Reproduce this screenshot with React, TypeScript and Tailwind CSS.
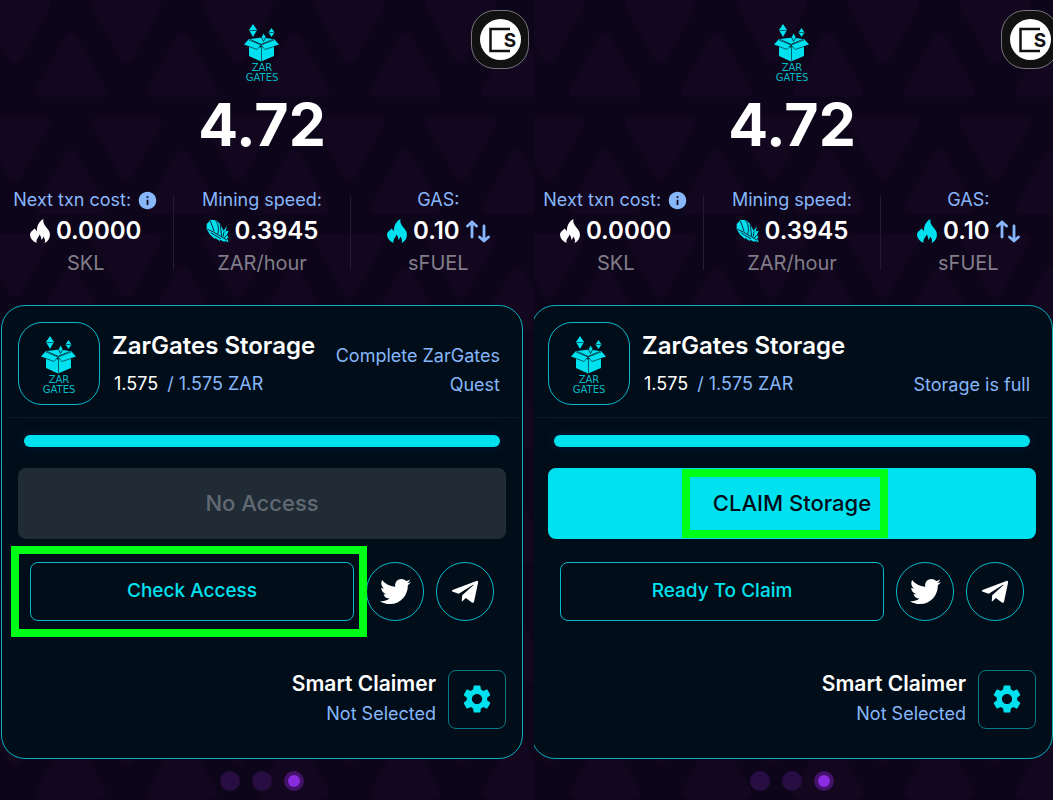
import { useId, type ReactNode } from "react";
import { FaTelegramPlane, FaTwitter } from "react-icons/fa";
import { MdInfo, MdSettings } from "react-icons/md";

function TriangleBackground() {
    const id = useId()

    return (
        <svg className="absolute inset-0 h-full w-full" aria-hidden="true">
            <defs>
                <pattern id={id} x="15" y="0" width="111.5" height="117" patternUnits="userSpaceOnUse">
                    <g fill="#12071e" stroke="#12071e" strokeWidth="12" strokeLinejoin="round">
                        <path d="M-29 5H29L0 57Z" />
                        <path d="M82.500 5H140.500L111.500 57Z" />
                        <path d="M27 91H85L56 39Z" />
                    </g>
                </pattern>
            </defs>
            <rect width="100%" height="100%" fill={`url(#${id})`} />
        </svg>
    )
}

function ZarGatesLogo() {
    return (
        <svg width="60" height="60" viewBox="0 0 60 60" aria-label="Zar Gates">
            <g fill="#00e1ef">
                <path d="M21 2L25 8L21 15L17 8Z" />
                <path d="M39.500 6L42.500 10.500L39.500 15L36.500 10.500Z" />
                <path d="M17 22L29 25.500L42 22V34L29 39.500L17 34Z" />
                <path d="M17 17L29 23L25 27L12 22.500Z" />
                <path d="M42 17L29 23L33 27L47 22.500Z" />
                <path d="M18 17L30 15.500L41 17L29 22Z" />
                <path d="M31.500 11L34 15L31.500 19.500L29.500 15Z" stroke="#020d19" strokeWidth="0.700" />
            </g>
            <path
                d="M17.500 8.500H24.500M37 10.500H42M29.500 23V40M17 18L29 23L42 18M17 24.500L25 27.500L29 23L33 27.500L42 24.500"
                fill="none"
                stroke="#02505c"
                strokeWidth="0.900"
            />
            <g fill="#08b9c7" fontFamily="DejaVu Sans" fontSize="10" textAnchor="middle">
                <text x="30" y="49">ZAR</text>
                <text x="30" y="59">GATES</text>
            </g>
        </svg>
    )
}

function FlameIcon({ className }: { className: string }) {
    return (
        <svg width="20" height="24" viewBox="0 0 58 70" className={className} aria-hidden="true">
            <path
                fill="currentColor"
                d="M39 0C37 12 43 18 49 26C55 33 58 38 58 46C58 57 52 66 42 70C46 63 43 57 38 51C38 56 36 59 33 61C33 54 31 49 27 45C27 53 16 58 19 70C8 65 0 56 0 46C0 38 8 34 13 28C16 30 18 33 18 36C21 33 20 28 21 23C23 13 31 4 39 0Z"
            />
        </svg>
    )
}

function MeteorIcon() {
    return (
        <svg width="23" height="24" viewBox="0 0 68 70" aria-hidden="true">
            <path fill="#00e1ef" d="M2 14L14 2L30 3L42 14L52 34L62 20L58 36L67 34L62 46L67 56L62 56L67 68L54 64L56 68L40 60L42 66L26 54L28 60L12 46L2 30Z" />
            <path
                fill="none"
                stroke="#0d051a"
                strokeWidth="2.500"
                d="M4 30L22 38L62 62M14 40L44 58M13 5L24 36M28 4C37 14 38 28 35 44M42 15L46 50M54 36L50 52M62 46L54 56"
            />
        </svg>
    )
}

function SwapArrowsIcon() {
    return (
        <svg width="24" height="23" viewBox="0 0 24 23" fill="none" stroke="#87b7fa" strokeWidth="2.800" strokeLinecap="round" strokeLinejoin="round">
            <path d="M6 17V2M1.500 6L6 2L10.500 6" />
            <path d="M18 6V21M13.500 17L18 21L22.500 17" />
        </svg>
    )
}

function WalletBadge() {
    return (
        <button
            aria-label="SKALE network"
            className="absolute -right-[6px] top-[10px] flex h-[59px] w-[58px] items-center justify-center rounded-3xl border border-[#77747d] bg-[#111]"
        >
            <svg width="41" height="41" viewBox="0 0 41 41" aria-hidden="true">
                <circle cx="20.500" cy="20.500" r="20.500" fill="#fff" />
                <path d="M30 10H10.500V32H30" fill="none" stroke="#111" strokeWidth="2.500" />
                <rect x="24" y="13" width="12" height="16" fill="#fff" />
                <text x="30" y="28" fontFamily="Inter" fontSize="19" fontWeight="700" textAnchor="middle" fill="#111">S</text>
            </svg>
        </button>
    )
}

function Stat({ label, unit, children }: { label: ReactNode; unit: string; children: ReactNode }) {
    return (
        <div className="flex flex-1 flex-col items-center">
            <p className="flex items-center gap-1.5 text-lg leading-7 text-[#87b7fa]">{label}</p>
            <div className="mt-px flex items-center gap-1.5 text-2xl leading-8 font-semibold">{children}</div>
            <p className="text-xl leading-8 text-[#827d89]">{unit}</p>
        </div>
    )
}

function Divider() {
    return <div className="mt-2.5 h-[74px] w-px bg-[#241c30]" />
}

function SocialLink({ label, children }: { label: string; children: ReactNode }) {
    return (
        <a
            href="#"
            aria-label={label}
            className="flex h-[59px] w-[58px] shrink-0 items-center justify-center rounded-full border border-[#06bac8] text-white"
        >
            {children}
        </a>
    )
}

interface StoragePanelProps {
    status: string
    claimButton: ReactNode
    accessLabel: string
    highlightAccess?: boolean
}

function StoragePanel({ status, claimButton, accessLabel, highlightAccess }: StoragePanelProps) {
    return (
        <div className="relative">
            <WalletBadge />

            <header className="flex flex-col items-center pt-[22px]">
                <ZarGatesLogo />
                <h1 className="mt-[13px] text-[59px] leading-[60px] font-bold">4.72</h1>
            </header>

            <div className="-mx-[3px] mt-[31px] flex">
                <Stat label={<>Next txn cost: <MdInfo size={21} /></>} unit="SKL">
                    <FlameIcon className="text-white" />
                    0.0000
                </Stat>
                <Divider />
                <Stat label="Mining speed:" unit="ZAR/hour">
                    <MeteorIcon />
                    0.3945
                </Stat>
                <Divider />
                <Stat label="GAS:" unit="sFUEL">
                    <FlameIcon className="text-[#00e1ef]" />
                    0.10
                    <SwapArrowsIcon />
                </Stat>
            </div>

            <section className="mt-[26px] rounded-3xl border border-[#06b0bd] bg-[#010d19] pb-[29px]">
                <div className="mx-1 flex gap-3 border-b border-[#0c1824] px-3 pt-4 pb-3">
                    <div className="flex h-[83px] w-[82px] shrink-0 items-center justify-center rounded-3xl border border-[#06bac8]">
                        <ZarGatesLogo />
                    </div>
                    <div className="pt-1.5 whitespace-nowrap">
                        <h2 className="text-2xl leading-9 font-semibold">ZarGates Storage</h2>
                        <p className="mt-1.5 ml-0.5 text-lg leading-7">
                            1.575 <span className="ml-1 text-[#87b7fa]">/ 1.575 ZAR</span>
                        </p>
                    </div>
                    <p className="mr-1.5 mb-1.5 flex-1 self-end text-right text-lg leading-[29px] text-[#87b7fa]">{status}</p>
                </div>

                <div className="mx-[22px] mt-[17px] h-3 rounded-full bg-[#00e1ef] shadow-[0_0_8px_3px_#03142b]" />

                <div className="mx-4 mt-[21px]">{claimButton}</div>

                <div className="mx-7 mt-[23px] flex gap-3">
                    <div className="relative flex-1">
                        <button className="h-[59px] w-full rounded-lg border border-[#06bac8] text-[19px] font-medium text-[#00e1ef]">
                            {accessLabel}
                        </button>
                        {highlightAccess && (
                            <div className="pointer-events-none absolute -top-4 -right-[13px] -bottom-4 -left-[19px] z-10 border-8 border-[#00ff17]" />
                        )}
                    </div>
                    <SocialLink label="Twitter"><FaTwitter size={31} /></SocialLink>
                    <SocialLink label="Telegram"><FaTelegramPlane size={30} /></SocialLink>
                </div>

                <div className="mx-4 mt-12 flex items-center justify-end gap-3">
                    <div className="text-right">
                        <h3 className="text-[21px] leading-[30px] font-semibold">Smart Claimer</h3>
                        <p className="text-lg leading-[30px] text-[#87b7fa]">Not Selected</p>
                    </div>
                    <button
                        aria-label="Smart Claimer settings"
                        className="flex h-[59px] w-[58px] items-center justify-center rounded-lg border border-[#057984] text-[#00e1ef]"
                    >
                        <MdSettings size={34} />
                    </button>
                </div>
            </section>

            <div className="mt-3 flex justify-center gap-3">
                <span className="h-5 w-5 rounded-full bg-[#270d41]" />
                <span className="h-5 w-5 rounded-full bg-[#270d41]" />
                <span className="flex h-5 w-5 items-center justify-center rounded-full bg-[#421269]">
                    <span className="h-3 w-3 rounded-full bg-[#8b2be0]" />
                </span>
            </div>
        </div>
    )
}

export default function App() {
    return (
        <main className="grid min-h-screen grid-cols-[534fr_519fr] bg-[#0d051a] font-[Inter,sans-serif] text-white">
            <div className="relative overflow-hidden pr-[11px] pl-px">
                <TriangleBackground />
                <StoragePanel
                    status="Complete ZarGates Quest"
                    accessLabel="Check Access"
                    highlightAccess
                    claimButton={
                        <button disabled className="h-[71px] w-full rounded-lg bg-[#202b36] text-[22px] font-medium text-[#616a72]">
                            No Access
                        </button>
                    }
                />
            </div>
            <div className="relative overflow-hidden">
                <TriangleBackground />
                <div className="-ml-[3px]">
                    <StoragePanel
                        status="Storage is full"
                        accessLabel="Ready To Claim"
                        claimButton={
                            <button className="flex h-[71px] w-full justify-center rounded-lg bg-[#00e1ef] text-[22px] font-medium text-[#020d19]">
                                <span className="relative flex h-full items-center">
                                    CLAIM Storage
                                    <span className="absolute inset-y-px -right-[17px] -left-[31px] border-8 border-[#00ff17]" />
                                </span>
                            </button>
                        }
                    />
                </div>
            </div>
        </main>
    )
}
